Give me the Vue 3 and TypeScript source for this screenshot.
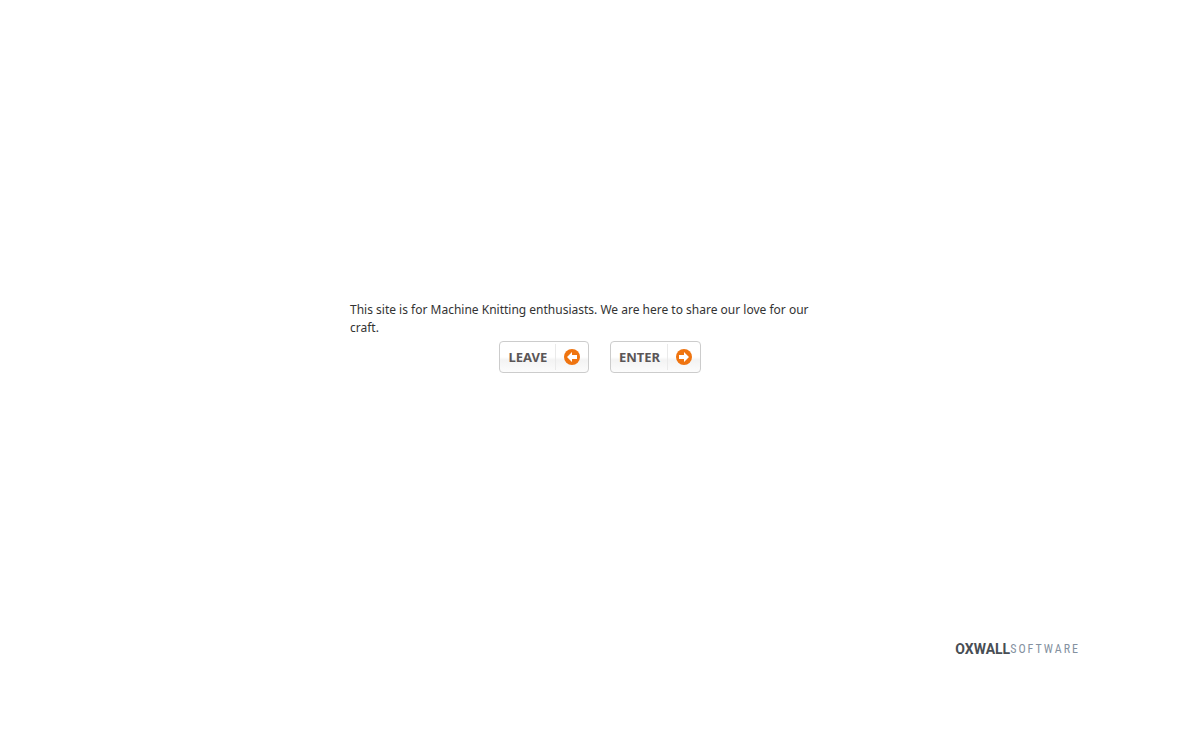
<script setup lang="ts">
interface Action {
  label: string
  arrow: string
}

const actions: Action[] = [
  { label: 'LEAVE', arrow: 'M3 8 8 3V6H13V10H8V13Z' },
  { label: 'ENTER', arrow: 'M13 8 8 3V6H3V10H8V13Z' },
]
</script>

<template>
  <div class="page">
    <main class="splash">
      <p class="intro">This site is for Machine Knitting enthusiasts. We are here to share our love for our craft.</p>
      <div class="actions">
        <button v-for="action in actions" :key="action.label" type="button" class="action">
          <span class="label">{{ action.label }}</span>
          <span class="icon">
            <svg width="16" height="16" viewBox="0 0 16 16" aria-hidden="true">
              <circle cx="8" cy="8" r="8" fill="#ef7410" />
              <path :d="action.arrow" fill="#fff" />
            </svg>
          </span>
        </button>
      </div>
    </main>
    <footer class="footer">
      <a class="brand" href="#"><span class="brand-name">OXWALL</span><span class="brand-kind">SOFTWARE</span></a>
    </footer>
  </div>
</template>

<style>
body {
  margin: 0;
  background: #fff;
}
</style>

<style scoped>
.page {
  box-sizing: border-box;
  min-height: 100vh;
  padding: 301px 120px 81px;
  display: flex;
  flex-direction: column;
  justify-content: space-between;
  font-family: "Noto Sans", "Open Sans", sans-serif;
}
.splash {
  width: 100%;
  max-width: 500px;
  margin: 0 auto;
}
.intro {
  max-width: 480px;
  margin: 0 0 4px;
  font-size: 12px;
  line-height: 18px;
  color: #333;
}
.actions {
  display: flex;
  justify-content: center;
  gap: 21px;
}
.action {
  display: flex;
  align-items: center;
  min-width: 90px;
  height: 32px;
  padding: 0 8px;
  border: 1px solid #ccc;
  border-radius: 4px;
  background: linear-gradient(#fff 50%, #f3f3f3 60%, #fcfcfc);
  font-family: inherit;
  font-size: 13px;
  font-weight: 700;
  color: #5b5657;
  cursor: pointer;
}
.label {
  flex: 1;
  line-height: 18px;
  padding-bottom: 1px;
}
.icon {
  display: flex;
  align-items: center;
  height: 26px;
  margin-left: 7px;
  padding-left: 8px;
  border-left: 1px solid #eaeaea;
}
.footer {
  display: flex;
  justify-content: flex-end;
}
.brand {
  display: flex;
  align-items: center;
  line-height: 20px;
  text-decoration: none;
}
.brand-name {
  font-family: Roboto, sans-serif;
  font-size: 14px;
  font-weight: 700;
  color: #484e54;
}
.brand-kind {
  font-family: "Liberation Sans Narrow", "Roboto Condensed", "Liberation Sans", sans-serif;
  font-size: 12px;
  letter-spacing: 2px;
  color: #8491a0;
}
</style>
